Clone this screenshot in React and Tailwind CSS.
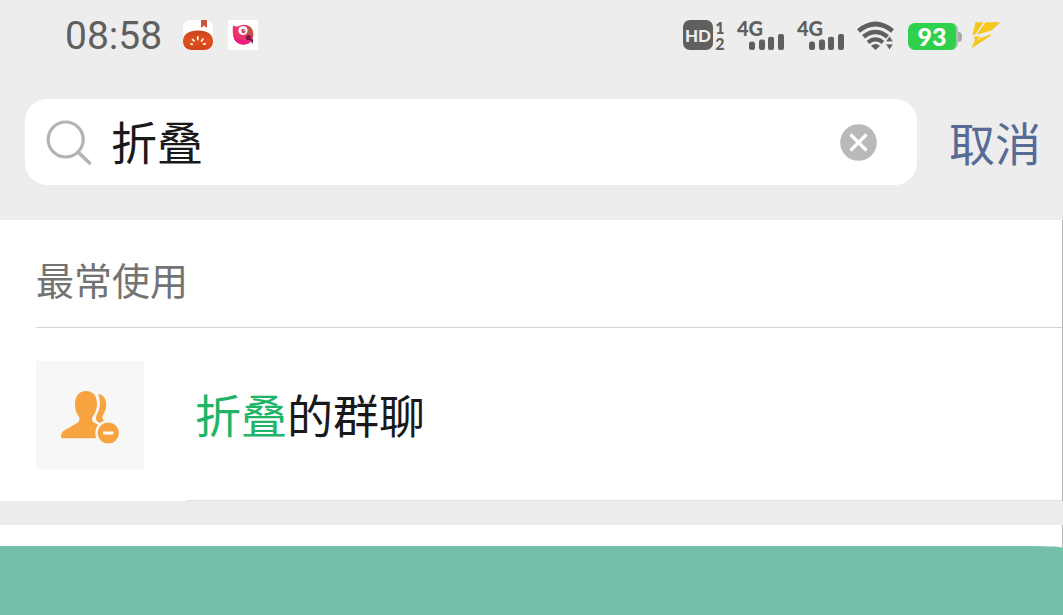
import { useState } from "react";

function TomatoIcon() {
  return (
    <svg viewBox="0 0 30 30" className="size-[30px]" aria-hidden="true">
      <defs>
        <linearGradient id="tomato" x1="0" y1="0" x2="0" y2="1">
          <stop offset="0" stopColor="#c8441f" />
          <stop offset="0.5" stopColor="#e0501c" />
          <stop offset="1" stopColor="#d2431a" />
        </linearGradient>
      </defs>
      <rect width="30" height="30" rx="7" fill="#fffdfb" />
      <path d="M18 0h6v8l-3-2.400L18 8z" fill="#c9553c" />
      <path d="M0 21C0 14.500 6 10.500 15 10.500S30 14.500 30 21c0 6-4 9-9 9H9c-5 0-9-3-9-9z" fill="url(#tomato)" />
      <g fill="none" stroke="#fff1e4" strokeWidth="1.700" strokeLinecap="round">
        <path d="M7.800 24l1.500.3M9.500 19.500l1.600 1.400M14.800 16.800v2.600M20 19l-1.500 2M22.300 23.900l-1.800.3" />
      </g>
    </svg>
  );
}

function BirdIcon() {
  return (
    <svg viewBox="0 0 30 30" className="size-[30px]" aria-hidden="true">
      <rect width="30" height="30" fill="#fff" />
      <path d="M5 5.500c2 1.200 4 1.500 6 .5 4-2 9-1.500 12 2 3.500 4 3 11-1 14.500-4.500 3.500-11 2.500-14.500-1.500C4.500 17.500 4.500 10.500 5 5.500z" fill="#e8336b" />
      <path d="M18.500 5.500c5 1 7.500 5 6.500 11l-6-3z" fill="#b9573f" />
      <path d="M6 14c2 5 8 7.500 14 5.500l1.500 3c-5 3.500-11 2-14-1.500C6 19 5.500 16.500 6 14z" fill="#ee1c7c" />
      <circle cx="15" cy="10.500" r="4.600" fill="#fff" />
      <circle cx="15.500" cy="11" r="2.200" fill="#d64a5c" />
      <circle cx="17" cy="9.800" r=".9" fill="#fff" />
      <circle cx="20.500" cy="17.500" r="2.600" fill="#7d1747" />
      <path d="M21 18l3.500 6 .8-4.500z" fill="#7d1747" />
    </svg>
  );
}

function Signal() {
  return (
    <div className="flex h-[30px] w-12 flex-col">
      <span className="h-[14px] text-[20px] leading-[16px] font-black">4G</span>
      <svg viewBox="0 0 48 16" className="h-4 w-12" fill="currentColor" aria-hidden="true">
        <rect x="12" y="7.500" width="6" height="8.500" rx="2.500" />
        <rect x="22" y="5.500" width="6" height="10.500" rx="2" />
        <rect x="31" y="2.700" width="6" height="13.300" rx="2" />
        <rect x="41" y="0" width="6" height="16" rx="2" />
      </svg>
    </div>
  );
}

function WifiIcon() {
  return (
    <svg viewBox="0 0 38 30" className="h-[30px] w-[38px]" fill="none" stroke="currentColor" aria-hidden="true">
      <path d="M1.500 11Q18.500-3 35.500 11" strokeWidth="4.600" />
      <path d="M6.500 16.800Q18.500 7 30.500 16.800" strokeWidth="4.400" />
      <path d="M11 22.300Q18.500 16.500 26 22.300" strokeWidth="4.200" />
      <path d="M14 25.800Q18.500 22.300 23 25.800L18.500 30z" fill="currentColor" stroke="none" />
      <path d="M32.500 15.800l4 6h-8zM32.500 30l4-6h-8z" fill="currentColor" stroke="#ededed" strokeWidth=".8" />
    </svg>
  );
}

function BoltIcon() {
  return (
    <svg viewBox="0 0 30 28" className="h-7 w-[30px]" fill="#f4c81e" aria-hidden="true">
      <path d="M5.500 1.300H13.500L5 13.800 2.500 14z" />
      <path d="M15.500 1.300H30.500L21.500 9.500 6.500 13.800z" />
      <path d="M3.500 16L9.500 15l-2 4.500L20.500 13l.5 1.500L1.500 27.500 5 18.500z" />
      <path d="M7 18L20 14.300 13 19.500z" />
    </svg>
  );
}

function StatusBar() {
  return (
    <div className="flex h-[70px] items-center justify-between pr-[63px] pl-[65px] text-[#5f5f5f]">
      <div className="flex items-center">
        <time className="pt-[3px] font-[Roboto,sans-serif] text-[39px] leading-none">08:58</time>
        <div className="ml-[21px] flex gap-[15px]">
          <TomatoIcon />
          <BirdIcon />
        </div>
      </div>
      <div className="flex items-center font-[Lato,sans-serif]">
        <div className="flex h-[30px] gap-[2px]">
          <span className="flex size-[30px] items-center justify-center rounded-[7px] bg-[#5f5f5f] text-[17px] leading-none font-black text-[#ededed]">
            HD
          </span>
          <span className="flex w-[10px] flex-col text-center text-[16px] leading-[16px] font-black">
            <span>1</span>
            <span>2</span>
          </span>
        </div>
        <div className="ml-3 flex gap-3">
          <Signal />
          <Signal />
        </div>
        <div className="ml-3">
          <WifiIcon />
        </div>
        <div className="ml-[13px] flex items-center pt-[3px]">
          <span className="flex h-[27px] w-[50px] items-center justify-center rounded-[7px] border-r-2 border-[#9ccca3] bg-[#2fd04b] text-[25px] leading-none font-black text-white">
            93
          </span>
          <span className="h-[10px] w-1 rounded-r-sm bg-[#a9a9a9]" />
        </div>
        <div className="ml-2">
          <BoltIcon />
        </div>
      </div>
    </div>
  );
}

function FoldedGroupIcon() {
  return (
    <svg viewBox="0 0 108 108" className="size-[108px] shrink-0 bg-[#f7f7f7]" aria-hidden="true">
      <g fill="#f7a440">
        <path d="M62 33c5 .5 8.500 5 8.300 11-.1 4-1.300 7-3 9.500-1.300 2-1.300 4.500.5 5.700l4 2.500-7 1.500-4.500-4c-.8-1.500-.3-4 .8-6 1.700-3 2.800-6.500 2.800-11 0-4-.6-7-1.900-9.200z" />
        <path d="M50 30c7 0 11 5 11 13 0 5-1.500 9-4 12-1.500 2-1.500 5 1 6.500l12 6V77.300H25.500c-1-3 0-6.500 3-8l13-7.500c2.500-1.500 2.500-4.500 1-6.500-2.300-3-3.500-7-3.500-12 0-8 4-13.300 11-13.300z" />
        <circle cx="72.300" cy="72" r="11.800" stroke="#f7f7f7" strokeWidth="2.400" />
      </g>
      <rect x="67" y="70.500" width="10.500" height="3" rx="1" fill="#fff" />
    </svg>
  );
}

export default function App() {
  const [query, setQuery] = useState("折叠");
  return (
    <div className="flex min-h-screen flex-col bg-[#ededed] font-['Noto_Sans_CJK_SC',sans-serif]">
      <header>
        <StatusBar />
        <form className="flex items-center pt-[29px] pr-[22px] pb-[35px] pl-[25px]" onSubmit={(e) => e.preventDefault()}>
          <div className="flex h-[86px] min-w-0 flex-1 items-center rounded-[22px] bg-white pr-10 pl-5">
            <label htmlFor="search" className="shrink-0">
              <svg viewBox="0 0 48 48" className="size-12" fill="none" stroke="#b3b3b3" strokeWidth="3.200" role="img" aria-label="搜索">
                <circle cx="20.700" cy="21.500" r="17.500" />
                <path d="M33 34l12.500 12" strokeWidth="3.600" />
              </svg>
            </label>
            <input
              id="search"
              type="text"
              value={query}
              onChange={(e) => setQuery(e.target.value)}
              className="ml-[18px] h-[68px] min-w-0 flex-1 bg-transparent pb-1 text-[46px] leading-[64px] text-[#191919] outline-none"
            />
            <button type="button" aria-label="清除" onClick={() => setQuery("")} className="shrink-0">
              <svg viewBox="0 0 37 37" className="size-[37px]">
                <circle cx="18.500" cy="18.500" r="18.300" fill="#b9b9b9" />
                <path d="M10.500 10.500l16 16M26.500 10.500l-16 16" stroke="#fff" strokeWidth="3.200" />
              </svg>
            </button>
          </div>
          <button type="button" className="ml-8 shrink-0 pb-[2px] text-[46px] leading-[64px] text-[#576b95]">
            取消
          </button>
        </form>
      </header>
      <main className="flex flex-1 flex-col">
        <section className="border-r border-[#b5b5b5] bg-white pl-9">
          <h2 className="border-b border-[#d4d4d4] pt-[31px] pb-5 text-[38px] leading-[56px] text-[#737373]">最常使用</h2>
          <a href="#folded" className="flex items-center">
            <FoldedGroupIcon />
            <span className="ml-[43px] flex flex-1 items-center border-b border-[#dedede] pt-[53px] pb-[55px] pl-2 text-[46px] leading-[64px] text-[#191919]">
              <span className="text-[#20b566]">折叠</span>的群聊
            </span>
          </a>
        </section>
        <div className="mt-6 flex flex-1 flex-col border-r border-[#b5b5b5] bg-white pt-[21px]">
          <div className="-mr-px flex-1 rounded-tr-[32px_2px] bg-[#73bfaa]" />
        </div>
      </main>
    </div>
  );
}
